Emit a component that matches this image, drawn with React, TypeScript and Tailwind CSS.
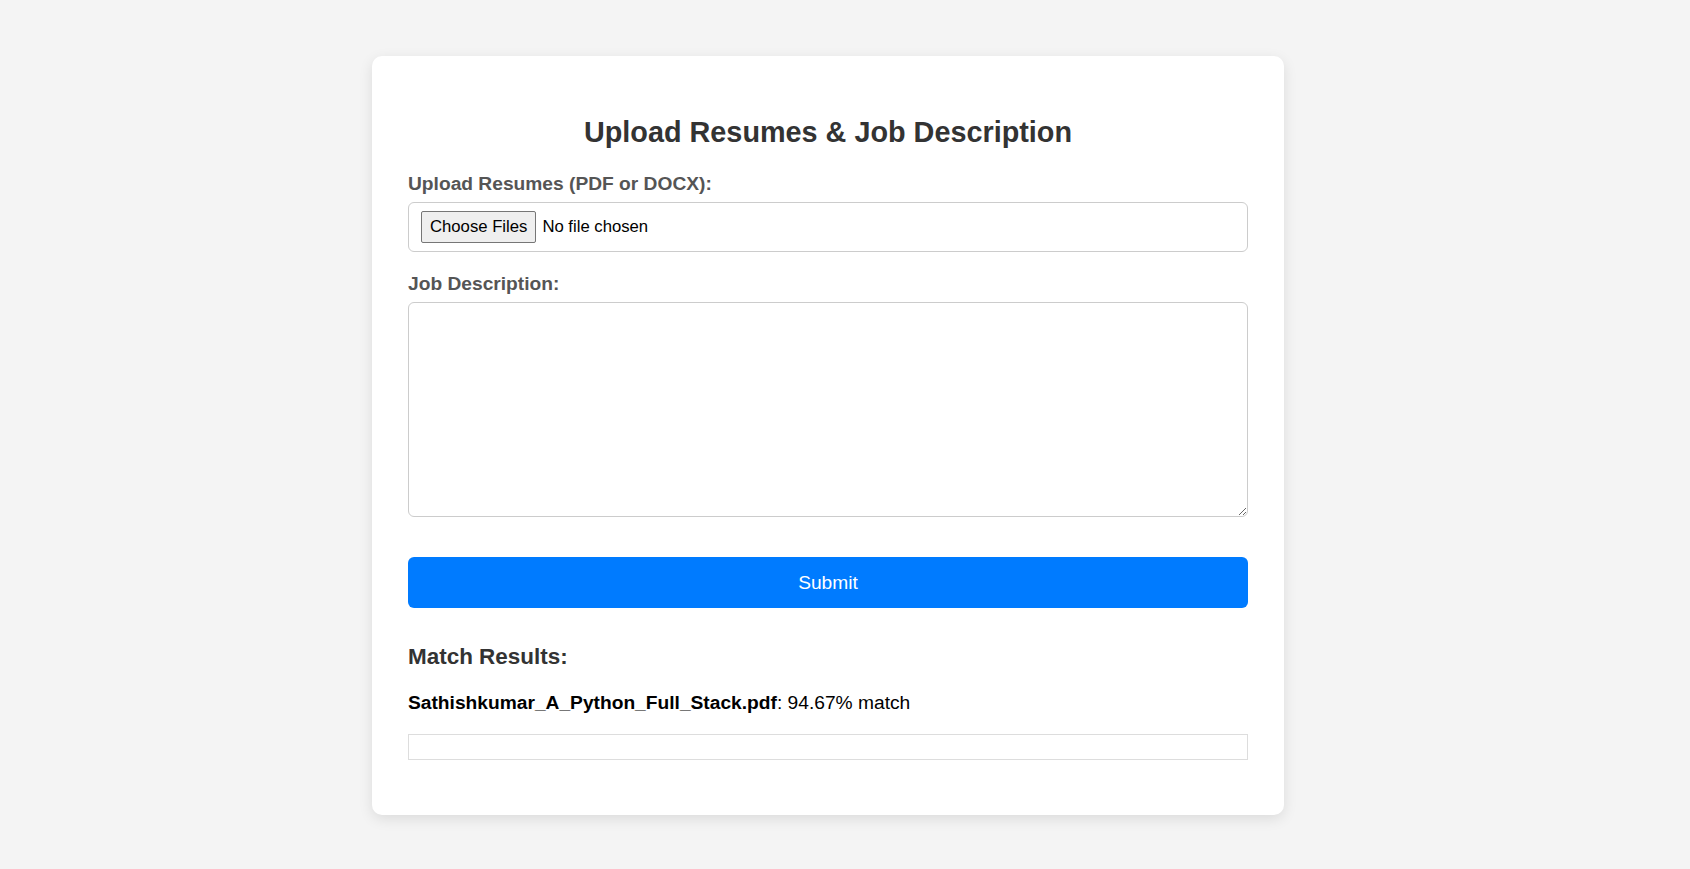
import React from "react";

export default function App() {
  return (
    <div
      className="h-screen overflow-hidden w-full bg-[#f4f4f4] flex justify-center items-start pr-[34px] pt-[56px]"
      style={{ fontFamily: '"Liberation Sans", Arial, sans-serif' }}
    >
      <div className="w-[912px] h-[759px] bg-white rounded-[10px] shadow-[0_4px_14px_rgba(0,0,0,0.1)] px-[36px] pt-[36px] pb-[53px] flex flex-col">
        <h2 className="mt-[24px] mb-[24px] text-[28.8px] leading-[33px] font-bold text-center text-[#333]">
          Upload Resumes &amp; Job Description
        </h2>
        <label className="block text-[19.2px] leading-[22px] font-bold text-[#555]">
          Upload Resumes (PDF or DOCX):
        </label>
        <div className="mt-[7px] h-[50px] border border-[#ccc] rounded-[6px] px-[12px] flex items-center">
          <input
            type="file"
            multiple
            className="text-[16.7px] text-black file:text-[16.7px] file:px-[8px] file:py-[2px] file:mr-[6px] file:border file:border-[#767676] file:bg-[#efefef] file:rounded-[2px] file:text-black"
            style={{ fontFamily: '"Liberation Sans", Arial, sans-serif' }}
          />
        </div>
        <label className="block mt-[21px] text-[19.2px] leading-[22px] font-bold text-[#555]">
          Job Description:
        </label>
        <textarea className="block shrink-0 mt-[7px] w-full h-[215px] border border-[#ccc] rounded-[6px] p-[12px] text-[16px] outline-none" />
        <button className="shrink-0 mt-[40px] h-[51px] w-full bg-[#007bff] rounded-[6px] text-white text-[19.2px] leading-[22px]">
          Submit
        </button>
        <h3 className="mt-[36px] text-[22.46px] leading-[26px] font-bold text-[#333]">
          Match Results:
        </h3>
        <p className="mt-[21.5px] text-[19.2px] leading-[22px] text-black">
          <strong className="font-bold">Sathishkumar_A_Python_Full_Stack.pdf</strong>: 94.67% match
        </p>
        <div className="shrink-0 mt-[20px] h-[26px] border border-[#ddd]" />
      </div>
    </div>
  );
}
